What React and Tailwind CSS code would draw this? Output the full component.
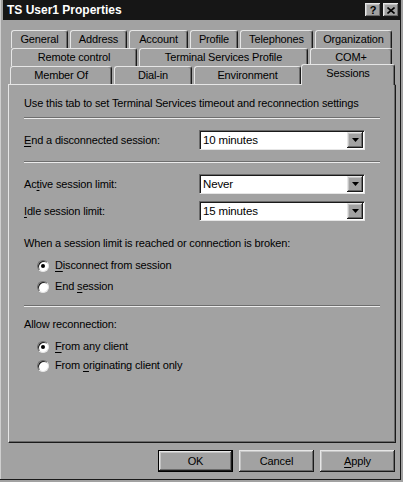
const raised =
  'shadow-[inset_-1px_-1px_0_#1a1a1a,inset_1px_1px_0_#e6e6e6,inset_-2px_-2px_0_#6a6a6a,inset_2px_2px_0_#c4c4c4]'

const Tab = ({ label, w, selected }) => (
  <div
    className={`flex justify-center rounded-t-[3px] border-t border-l border-r border-t-[#e6e6e6] border-l-[#e6e6e6] border-r-[#1a1a1a] bg-[#a2a2a2] leading-[13px] shadow-[inset_-1px_0_0_#6a6a6a] ${
      selected ? 'relative z-10 -mb-px h-[21px] pt-[2px]' : 'h-[18px] pt-[2px]'
    }`}
    style={{ width: w }}
  >
    {label}
  </div>
)

const Separator = ({ className }) => (
  <div className={`h-[2px] border-t border-b border-t-[#6e6e6e] border-b-[#ececec] ${className}`} />
)

const Select = ({ value }) => (
  <div className="flex h-[20px] w-[166px] border border-t-[#6a6a6a] border-l-[#6a6a6a] border-r-[#e6e6e6] border-b-[#e6e6e6] bg-white shadow-[inset_1px_1px_0_#1a1a1a]">
    <div className="flex-1 pl-[3px] pt-[3px] text-[11.5px] leading-[13px]">{value}</div>
    <div className={`my-[1px] mr-[1px] flex w-[16px] items-center justify-center bg-[#a2a2a2] ${raised}`}>
      <svg width="7" height="4" viewBox="0 0 7 4">
        <path d="M0 0h7L3.5 4z" fill="#000" />
      </svg>
    </div>
  </div>
)

const Radio = ({ checked, children, className }) => (
  <div className={`flex h-[13px] items-center gap-[6px] pl-[13px] ${className}`}>
    <div className="flex h-[12px] w-[12px] items-center justify-center rounded-full border border-t-[#6a6a6a] border-l-[#6a6a6a] border-r-[#e6e6e6] border-b-[#e6e6e6] bg-white shadow-[inset_1px_1px_0_#1a1a1a]">
      {checked && <div className="h-[4px] w-[4px] rounded-full bg-black" />}
    </div>
    <span className="leading-[13px]">{children}</span>
  </div>
)

const Button = ({ children, isDefault }) => (
  <div
    className={`flex h-[22px] w-[75px] items-center justify-center bg-[#a2a2a2] ${raised} ${
      isDefault ? 'border border-black' : ''
    }`}
  >
    {children}
  </div>
)

const u = 'underline underline-offset-[2px]'

export default function App() {
  return (
    <div className="flex h-[482px] w-[403px] flex-col bg-[#a2a2a2] font-['Liberation_Sans',Arial,sans-serif] text-[11px] tracking-[-0.15px] text-black shadow-[inset_-2px_-2px_0_#a2a2a2,inset_-3px_-3px_0_#1a1a1a,inset_1px_0_0_#cfcfcf]">
      {/* title bar */}
      <div className="mx-[3px] flex h-[20px] items-center justify-between bg-[#161616] pl-[4px] pr-[1px]">
        <span className="text-[12px] font-bold tracking-normal text-white">TS User1 Properties</span>
        <div className="flex gap-[2px]">
          <div className={`flex h-[14px] w-[16px] items-center justify-center bg-[#a2a2a2] text-[11px] font-bold leading-none ${raised}`}>
            ?
          </div>
          <div className={`flex h-[14px] w-[16px] items-center justify-center bg-[#a2a2a2] ${raised}`}>
            <svg width="8" height="7" viewBox="0 0 8 7">
              <path d="M0.5 0.5L7.5 6.5M7.5 0.5L0.5 6.5" stroke="#000" strokeWidth="1.6" />
            </svg>
          </div>
        </div>
      </div>

      <div className="ml-[8px] mt-[10px] flex w-[388px] flex-col">
        {/* tabs */}
        <div className="ml-[3px] flex gap-[2px]">
          <Tab label="General" w={57} />
          <Tab label="Address" w={57} />
          <Tab label="Account" w={59} />
          <Tab label="Profile" w={48} />
          <Tab label="Telephones" w={73} />
          <Tab label="Organization" w={77} />
        </div>
        <div className="ml-[3px] flex gap-[2px]">
          <Tab label="Remote control" w={126} />
          <Tab label="Terminal Services Profile" w={169} />
          <Tab label="COM+" w={82} />
        </div>
        <div className="ml-[2px] flex h-[18px] items-end">
          <div className="flex gap-[2px]">
            <Tab label="Member Of" w={102} />
            <Tab label="Dial-in" w={78} />
            <Tab label="Environment" w={107} />
          </div>
          <Tab label="Sessions" w={94} selected />
        </div>

        {/* panel */}
        <div className="flex h-[359px] flex-col border border-t-[#e6e6e6] border-l-[#e6e6e6] border-r-[#1a1a1a] border-b-[#1a1a1a] px-[15px] shadow-[inset_-1px_-1px_0_#6a6a6a]">
          <div className="mt-[12px] leading-[13px]">
            Use this tab to set Terminal Services timeout and reconnection settings
          </div>
          <Separator className="mt-[7px]" />

          <div className="mt-[11px] flex items-center">
            <span className="w-[175px]">
              <span className={u}>E</span>nd a disconnected session:
            </span>
            <Select value="10 minutes" />
          </div>
          <Separator className="mt-[11px]" />

          <div className="mt-[11px] flex items-center">
            <span className="w-[175px]">
              Ac<span className={u}>t</span>ive session limit:
            </span>
            <Select value="Never" />
          </div>
          <div className="mt-[7px] flex items-center">
            <span className="w-[175px]">
              <span className={u}>I</span>dle session limit:
            </span>
            <Select value="15 minutes" />
          </div>

          <div className="mt-[16px] leading-[13px]">
            When a session limit is reached or connection is broken:
          </div>
          <Radio checked className="mt-[9px]">
            <span className={u}>D</span>isconnect from session
          </Radio>
          <Radio className="mt-[8px]">
            End <span className={u}>s</span>ession
          </Radio>
          <Separator className="mt-[12px]" />

          <div className="mt-[11px] leading-[13px]">Allow reconnection:</div>
          <Radio checked className="mt-[9px]">
            <span className={u}>F</span>rom any client
          </Radio>
          <Radio className="mt-[6px]">
            From <span className={u}>o</span>riginating client only
          </Radio>
        </div>

        {/* buttons */}
        <div className="mt-[7px] flex justify-end gap-[6px] pr-[1px]">
          <Button isDefault>OK</Button>
          <Button>Cancel</Button>
          <Button>
            <span>
              <span className={u}>A</span>pply
            </span>
          </Button>
        </div>
      </div>
    </div>
  )
}
